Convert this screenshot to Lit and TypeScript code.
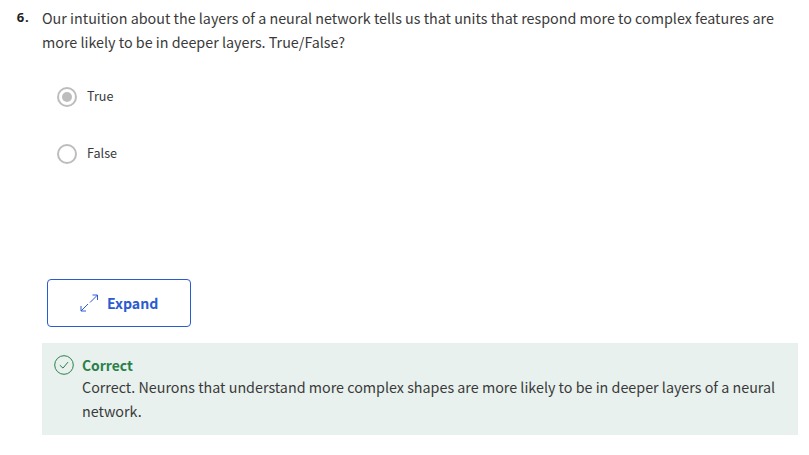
import { LitElement, html, css, svg } from "lit";
import { customElement, property } from "lit/decorators.js";

@customElement("quiz-option")
class QuizOption extends LitElement {
  @property() label = "";
  @property({ type: Boolean }) checked = false;
  static styles = css`
    :host { display: flex; align-items: center; height: 20px; gap: 10px; }
    svg { display: block; flex: none; }
    .label { font-size: 12.6px; line-height: 20px; color: #373a3c; margin-top: -2px; }
  `;
  render() {
    return html`
      <svg width="20" height="20" viewBox="0 0 20 20">
        <circle cx="10" cy="10" r="9" fill="#fff" stroke="#bdbdbd" stroke-width="2" />
        ${this.checked ? svg`<circle cx="10" cy="10" r="5" fill="#bdbdbd" />` : null}
      </svg>
      <span class="label">${this.label}</span>
    `;
  }
}

@customElement("app-root")
class AppRoot extends LitElement {
  static styles = css`
    :host {
      display: block; box-sizing: border-box; height: 455px; padding: 6px 11px 0 16px;
      background: #fff; color: #3a3a3a; overflow: hidden;
      font-family: "Noto Sans CJK SC", "Noto Sans", sans-serif;
    }
    .question { display: grid; grid-template-columns: 26px 1fr; }
    .number {
      font-family: "Open Sans", sans-serif; font-size: 13px; font-weight: 700;
      line-height: 22px; letter-spacing: 0.8px; padding-left: 0.7px; color: #1f1f1f;
    }
    .copy { font-size: 14.32px; line-height: 24px; white-space: nowrap; }
    .line { display: block; }
    .options { display: flex; flex-direction: column; gap: 37px; margin: 33px 0 0 41px; }
    .expand {
      display: flex; align-items: center; box-sizing: border-box; width: 144px; height: 48px;
      margin: 115px 0 0 31px; padding: 0 0 0 32px; gap: 8px; border: 1px solid #2a5bd0;
      border-radius: 4px; background: #fff; color: #2a5bd0; font: inherit;
      font-size: 14.1px; font-weight: 700; line-height: 24px;
    }
    .feedback {
      display: grid; grid-template-columns: 20px 1fr; column-gap: 8px; box-sizing: border-box;
      height: 92px; margin: 16px 0 0 26px; padding: 12px; background: #e8f1ee;
    }
    .title { font-size: 13.9px; font-weight: 700; line-height: 22px; margin-top: -1px; color: #2b8049; }
    .feedback .copy { margin-top: -1px; }
    svg { display: block; flex: none; }
  `;
  render() {
    return html`
      <div class="question">
        <span class="number">6.</span>
        <div class="copy">
          <span class="line">Our intuition about the layers of a neural network tells us that units that respond more to complex features are</span>
          <span class="line">more likely to be in deeper layers. True/False?</span>
        </div>
      </div>
      <div class="options">
        <quiz-option label="True" checked></quiz-option>
        <quiz-option label="False"></quiz-option>
      </div>
      <button class="expand">
        <svg width="19" height="20" viewBox="0 0 19 20" fill="none" stroke="#2a5bd0">
          <path d="M10 9.500L17.500 2M12.500 2h5v5M8 11L1 18M1 13v5h5" />
        </svg>
        <span>Expand</span>
      </button>
      <div class="feedback">
        <svg width="20" height="20" viewBox="0 0 20 20" fill="none" stroke="#2b8049">
          <circle cx="10" cy="10" r="9.300" />
          <path d="M5.800 10.200l3.200 2.900 5-6" />
        </svg>
        <div>
          <div class="title">Correct</div>
          <div class="copy">
            <span class="line">Correct. Neurons that understand more complex shapes are more likely to be in deeper layers of a neural</span>
            <span class="line">network.</span>
          </div>
        </div>
      </div>
    `;
  }
}
